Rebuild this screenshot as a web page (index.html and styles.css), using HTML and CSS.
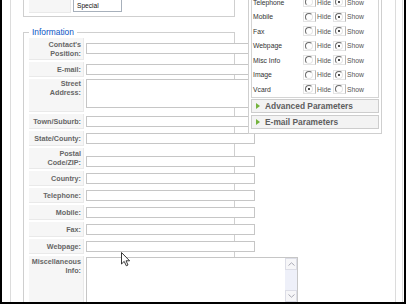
FILE: index.html
```html
<!DOCTYPE html>
<html>
<head>
<meta charset="utf-8">
<link rel="stylesheet" href="styles.css">
</head>
<body>
<div class="frame">
  <div class="page">
    <div class="cols">
      <div class="lcol">
        <div class="fs-top">
          <div class="top-row">
            <div class="key-top"></div>
            <div class="listbox"><div class="opt">Special</div></div>
          </div>
        </div>
        <fieldset class="fs-info">
          <legend>Information</legend>
          <div class="form">
            <div class="row r-contact"><div class="key">Contact's<br>Position:</div><div class="field"><input class="in" type="text"></div></div>
            <div class="row"><div class="key">E-mail:</div><div class="field"><input class="in" type="text"></div></div>
            <div class="row r-street"><div class="key top">Street<br>Address:</div><div class="field"><textarea class="ta"></textarea></div></div>
            <div class="row"><div class="key">Town/Suburb:</div><div class="field"><input class="in" type="text"></div></div>
            <div class="row"><div class="key">State/County:</div><div class="field"><input class="in" type="text"></div></div>
            <div class="row r-postal"><div class="key">Postal<br>Code/ZIP:</div><div class="field"><input class="in" type="text"></div></div>
            <div class="row"><div class="key">Country:</div><div class="field"><input class="in" type="text"></div></div>
            <div class="row"><div class="key">Telephone:</div><div class="field"><input class="in" type="text"></div></div>
            <div class="row"><div class="key">Mobile:</div><div class="field"><input class="in" type="text"></div></div>
            <div class="row"><div class="key">Fax:</div><div class="field"><input class="in" type="text"></div></div>
            <div class="row"><div class="key">Webpage:</div><div class="field"><input class="in" type="text"></div></div>
            <div class="row r-misc"><div class="key top">Miscellaneous<br>Info:</div>
              <div class="field">
                <div class="misc">
                  <div class="misc-body"></div>
                  <div class="sbar">
                    <div class="sbtn"><svg width="7" height="4" viewBox="0 0 7 4"><path d="M0.5 3.5 L3.5 0.8 L6.5 3.5" fill="none" stroke="#a9a9b4" stroke-width="1"/></svg></div>
                    <div class="strack"></div>
                    <div class="sbtn"><svg width="7" height="4" viewBox="0 0 7 4"><path d="M0.5 0.5 L3.5 3.2 L6.5 0.5" fill="none" stroke="#a9a9b4" stroke-width="1"/></svg></div>
                  </div>
                </div>
              </div>
            </div>
          </div>
        </fieldset>
      </div>
      <div class="rcol">
        <div class="pane">
          <div class="panel">
            <div class="prow"><span class="plabel">Telephone</span><span class="radio"><i></i></span><span class="rl">Hide</span><span class="radio on"><i></i></span><span class="rl">Show</span></div>
            <div class="prow"><span class="plabel">Mobile</span><span class="radio"><i></i></span><span class="rl">Hide</span><span class="radio on"><i></i></span><span class="rl">Show</span></div>
            <div class="prow"><span class="plabel">Fax</span><span class="radio"><i></i></span><span class="rl">Hide</span><span class="radio on"><i></i></span><span class="rl">Show</span></div>
            <div class="prow"><span class="plabel">Webpage</span><span class="radio"><i></i></span><span class="rl">Hide</span><span class="radio on"><i></i></span><span class="rl">Show</span></div>
            <div class="prow"><span class="plabel">Misc Info</span><span class="radio"><i></i></span><span class="rl">Hide</span><span class="radio on"><i></i></span><span class="rl">Show</span></div>
            <div class="prow"><span class="plabel">Image</span><span class="radio"><i></i></span><span class="rl">Hide</span><span class="radio on"><i></i></span><span class="rl">Show</span></div>
            <div class="prow"><span class="plabel">Vcard</span><span class="radio on"><i></i></span><span class="rl">Hide</span><span class="radio"><i></i></span><span class="rl">Show</span></div>
          </div>
          <div class="toggler"><span class="arrow"></span>Advanced Parameters</div>
          <div class="toggler"><span class="arrow"></span>E-mail Parameters</div>
        </div>
      </div>
    </div>
  </div>
  <svg class="cursor" width="11" height="16" viewBox="0 0 11 16"><path d="M0.5 0.5 L0.5 12 L3.2 9.4 L5.3 13.8 L7 13 L5 8.8 L8.6 8.8 Z" fill="#fff" stroke="#222" stroke-width="0.9" stroke-linejoin="round"/></svg>
</div>
</body>
</html>
```
FILE: styles.css
```css
* { box-sizing: border-box; margin: 0; padding: 0; }
html, body { width: 407px; height: 306px; overflow: hidden; background: #fff; }
body { font-family: "Liberation Sans", Arial, sans-serif; }

.frame {
  position: relative;
  width: 406px;
  height: 304px;
  border-left: 2px solid #000;
  border-right: 2px solid #000;
  border-bottom: 2px solid #000;
  overflow: hidden;
  background: #fff;
}
.page {
  margin-left: 8px;
  width: 393px;
  height: 302px;
  border-left: 1px solid #dcdcdc;
  border-right: 1px solid #dcdcdc;
}
.cols {
  display: flex;
  width: 385px;
  height: 100%;
  border-right: 1px solid #dcdcdc;
}
.lcol { flex: 0 0 237px; width: 237px; }
.rcol { flex: 0 0 134px; width: 134px; }

/* upper (cut) fieldset */
.fs-top {
  margin: -9px 0 0 12px;
  width: 212px;
  border: 1px solid #cfcfcf;
  border-top: none;
  padding: 0 5px 3px 5px;
}
.top-row { display: flex; align-items: flex-start; gap: 2px; height: 22px; }
.key-top {
  width: 42px; height: 22px;
  background: #f6f6f6;
  border-bottom: 1px solid #e9e9e9;
  border-right: 1px solid #e9e9e9;
}
.listbox {
  width: 49px; height: 21px;
  border: 1px solid #a7b0bb;
  display: flex; flex-direction: column; justify-content: flex-end;
  padding: 0 0 1px 3px;
  font-size: 6.6px; line-height: 9px; color: #111;
}

/* information fieldset */
.fs-info {
  margin: 10px 0 0 12px;
  width: 212px;
  min-width: 0;
  border: 1px solid #cfcfcf;
  padding: 0 5px 10px 5px;
}
.fs-info legend {
  padding: 0 3px;
  font-size: 8.4px;
  line-height: 11px;
  color: #0b55c4;
}
.form { display: flex; flex-direction: column; gap: 2px; }
.row { display: grid; grid-template-columns: 55px minmax(0, 1fr); height: 15px; }
.key {
  background: #f6f6f6;
  border-bottom: 1px solid #e9e9e9;
  border-right: 1px solid #e9e9e9;
  color: #666;
  font-weight: bold;
  font-size: 7.2px;
  line-height: 9px;
  text-align: right;
  padding-right: 2px;
  display: flex;
  align-items: center;
  justify-content: flex-end;
}
.key.top { align-items: flex-start; }
.field { display: flex; align-items: center; padding-left: 2px; }
.in {
  flex: none;
  width: 169px; height: 11px;
  border: 1px solid #c6c6c6;
  background: #fff;
  outline: none;
}
.r-contact { height: 22px; }
.r-contact .field { align-items: flex-start; padding-top: 5px; }
.r-street { height: 33px; }
.r-street .field { align-items: flex-start; }
.ta {
  flex: none;
  width: 169px; height: 29px;
  border: 1px solid #c6c6c6;
  resize: none;
  background: #fff;
}
.r-postal { height: 21px; }
.r-postal .field { align-items: flex-start; padding-top: 8px; }
.r-misc { height: 60px; }
.r-misc .key { padding-top: 1px; }
.r-misc .field { align-items: flex-start; padding-top: 1px; }
.misc {
  flex: none;
  width: 212px; height: 46px;
  border: 1px solid #c6c6c6;
  background: #fff;
  display: flex;
}
.misc-body { flex: 1; }
.sbar { width: 12px; display: flex; flex-direction: column; background: #eef0f9; }
.sbtn {
  height: 12px;
  background: #f6f6f8;
  border: 1px solid #dcdde6;
  display: flex; align-items: center; justify-content: center;
}
.strack { flex: 1; }

/* right column */
.pane {
  margin-top: -7px;
  border: 1px solid #cfcfcf;
  padding: 0 2px 4px 2px;
  background: #fff;
}
.panel { border: 1px solid #d4d4d4; margin-bottom: 1.5px; }
.prow {
  height: 14.5px;
  display: flex;
  align-items: center;
  font-size: 6.8px;
  color: #333;
}
.plabel { width: 51px; padding-left: 1px; flex: none; }
.radio {
  flex: none;
  width: 13px; height: 10px;
  border: 1px solid #e4e4e4;
  border-right-color: #b9b9b9;
  display: flex; align-items: center;
  padding-left: 1px;
}
.radio i {
  width: 8px; height: 8px;
  border-radius: 50%;
  border: 1px solid;
  border-color: #6a6a6a #e6e6e6 #e6e6e6 #6a6a6a;
  display: flex; align-items: center; justify-content: center;
}
.radio.on i::after {
  content: "";
  width: 2px; height: 2px;
  border-radius: 50%;
  background: #111;
}
.rl { width: 16px; margin-left: 1px; color: #555; flex: none; }
.toggler {
  height: 14px;
  border: 1px solid #cdcdcd;
  background: #f3f3f3;
  display: flex; align-items: center;
  padding-left: 4px;
  font-weight: bold;
  font-size: 8.4px;
  color: #5e5e5e;
  margin-bottom: 2px;
}
.toggler:last-child { margin-bottom: 0; }
.arrow {
  width: 0; height: 0;
  border-left: 4px solid #74b33c;
  border-top: 3px solid transparent;
  border-bottom: 3px solid transparent;
  margin-right: 5px;
}

.cursor { position: absolute; left: 119px; top: 252px; }
```
